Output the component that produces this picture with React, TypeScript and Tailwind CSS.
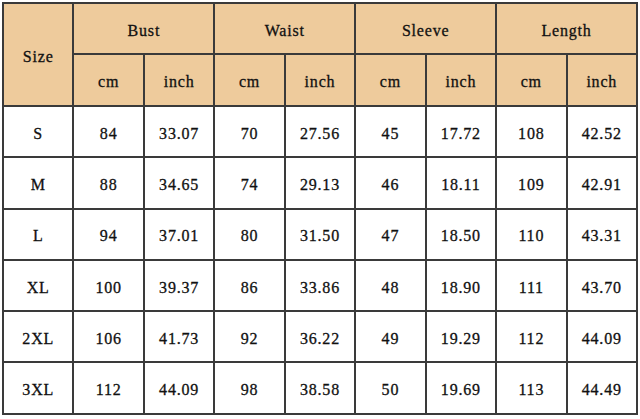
const GROUPS = ["Bust", "Waist", "Sleeve", "Length"];

const ROWS = [
  { size: "S", values: ["84", "33.07", "70", "27.56", "45", "17.72", "108", "42.52"] },
  { size: "M", values: ["88", "34.65", "74", "29.13", "46", "18.11", "109", "42.91"] },
  { size: "L", values: ["94", "37.01", "80", "31.50", "47", "18.50", "110", "43.31"] },
  { size: "XL", values: ["100", "39.37", "86", "33.86", "48", "18.90", "111", "43.70"] },
  { size: "2XL", values: ["106", "41.73", "92", "36.22", "49", "19.29", "112", "44.09"] },
  { size: "3XL", values: ["112", "44.09", "98", "38.58", "50", "19.69", "113", "44.49"] },
];

const cell = "border-2 border-[#3a3a3a] text-center align-middle p-0";

export default function App() {
  return (
    <div className="w-[640px] h-[419px] bg-white p-[2px] font-['Liberation_Serif',serif] text-[16px] tracking-[0.8px] text-[#111] [-webkit-text-stroke:0.3px_#111]">
      <table className="w-[636px] table-fixed border-collapse">
        <thead>
          <tr className="h-[51px] bg-[#eecb9c]">
            <th rowSpan={2} className={`${cell} font-normal pt-[4px]`}>
              Size
            </th>
            {GROUPS.map((g) => (
              <th key={g} colSpan={2} className={`${cell} font-normal pt-[5px]`}>
                {g}
              </th>
            ))}
          </tr>
          <tr className="h-[52px] bg-[#eecb9c]">
            {GROUPS.map((g) => [
              <th key={g + "cm"} className={`${cell} font-normal pt-[4px]`}>
                cm
              </th>,
              <th key={g + "in"} className={`${cell} font-normal pt-[4px]`}>
                inch
              </th>,
            ])}
          </tr>
        </thead>
        <tbody>
          {ROWS.map((r) => (
            <tr key={r.size} className="h-[51.3px]">
              <td className={`${cell} pt-[4px]`}>{r.size}</td>
              {r.values.map((v, i) => (
                <td key={i} className={`${cell} pt-[4px]`}>
                  {v}
                </td>
              ))}
            </tr>
          ))}
        </tbody>
      </table>
    </div>
  );
}
